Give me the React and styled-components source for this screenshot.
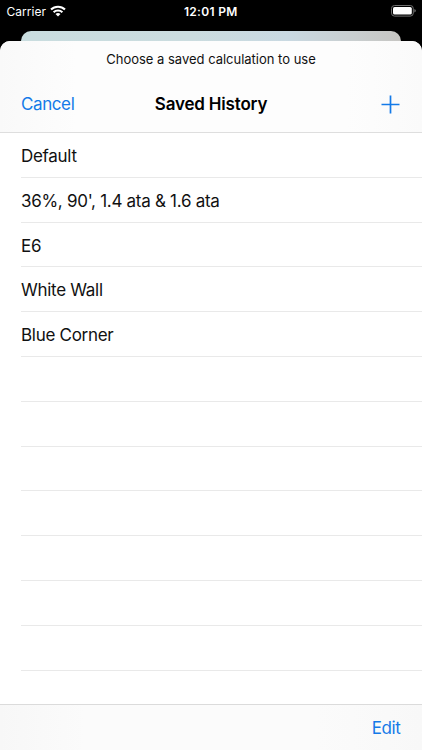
import React from 'react';
import styled, { createGlobalStyle } from 'styled-components';

const history = ["Default", "36%, 90', 1.4 ata & 1.6 ata", "E6", "White Wall", "Blue Corner"];
const emptyRows = 7;

export default function App() {
  return (
    <Screen>
      <GlobalStyle />
      <StatusBar>
        <Carrier>
          <span>Carrier</span>
          <svg width="16" height="12" viewBox="0 0 16 12" fill="none" stroke="#fff" strokeWidth="2.1">
            <path d="M1 4.6 A10 10 0 0 1 15 4.6" />
            <path d="M3.6 7.3 A6.3 6.3 0 0 1 12.4 7.3" />
            <path d="M5.5 9.1 A3.6 3.6 0 0 1 10.5 9.1 L8 11.6 Z" fill="#fff" stroke="none" />
          </svg>
        </Carrier>
        <Time>12:01 PM</Time>
        <Battery>
          <svg width="25" height="12" viewBox="0 0 25 12">
            <rect x="0.5" y="0.5" width="21.8" height="10.6" rx="3" fill="none" stroke="#6f6f6f" />
            <rect x="2" y="2" width="18.8" height="7.6" rx="1.6" fill="#fff" />
            <path d="M23.4 4 Q24.8 4.6 24.8 5.8 Q24.8 7 23.4 7.6 Z" fill="#777" />
          </svg>
        </Battery>
      </StatusBar>
      <BackCard />
      <Sheet>
        <Header>
          <Prompt>Choose a saved calculation to use</Prompt>
          <NavBar>
            <Action>Cancel</Action>
            <Title>Saved History</Title>
            <AddButton aria-label="Add">
              <svg width="19" height="19" viewBox="0 0 19 19" stroke="#147ae8" strokeWidth="1.7">
                <path d="M9.5 0.5 V18.5 M0.5 9.5 H18.5" />
              </svg>
            </AddButton>
          </NavBar>
        </Header>
        <List>
          {history.map((name) => (
            <Row key={name}>{name}</Row>
          ))}
          {Array.from({ length: emptyRows }, (_, index) => (
            <Row key={index} />
          ))}
        </List>
        <Toolbar>
          <Action>Edit</Action>
        </Toolbar>
      </Sheet>
    </Screen>
  )
}

const GlobalStyle = createGlobalStyle`
  * {
    box-sizing: border-box;
  }
  body {
    margin: 0;
    background: #000;
    font-family: Inter, "Liberation Sans", sans-serif;
  }
`;

const Screen = styled.div`
  display: flex;
  flex-direction: column;
  width: 422px;
  height: 750px;
  overflow: hidden;
  background: #000;
`;

const StatusBar = styled.div`
  display: grid;
  grid-template-columns: 1fr auto 1fr;
  align-items: center;
  flex: none;
  height: 31px;
  padding: 0 6px 9px 6.5px;
  color: #fff;
`;

const Carrier = styled.div`
  display: flex;
  align-items: center;
  gap: 4px;
  font-size: 12px;
  letter-spacing: 0.05px;
`;

const Time = styled.div`
  margin-right: 1px;
  font-size: 12px;
  font-weight: 600;
  letter-spacing: 0.3px;
`;

const Battery = styled.div`
  display: flex;
  justify-content: flex-end;
`;

const BackCard = styled.div`
  flex: none;
  height: 10px;
  margin: 0 21px;
  border-radius: 10px 10px 0 0;
  background: linear-gradient(90deg, #c9dddf 0%, #cbdcdf 45%, #c9d9e2 70%, #c9cecf 88%, #c6c5c2 100%);
`;

const Sheet = styled.div`
  display: flex;
  flex-direction: column;
  flex: 1;
  min-height: 0;
  overflow: hidden;
  border-radius: 10px 10px 0 0;
  background: #fff;
`;

const Header = styled.div`
  flex: none;
  height: 92px;
  border-bottom: 1px solid #dedede;
  background: linear-gradient(90deg, #f9f9f9 0%, #fdfdfd 18%, #fdfdfd 82%, #fafafa 100%);
`;

const Prompt = styled.div`
  height: 36px;
  line-height: 36px;
  font-size: 13px;
  letter-spacing: -0.01px;
  text-align: center;
  color: #111;
`;

const NavBar = styled.div`
  display: grid;
  grid-template-columns: 1fr auto 1fr;
  align-items: center;
  height: 55px;
  padding: 0 22px 1px 22px;
`;

const Action = styled.button`
  justify-self: start;
  margin-left: -1px;
  padding: 0;
  border: 0;
  background: none;
  color: #147ae8;
  font-family: inherit;
  font-size: 17px;
  letter-spacing: -0.4px;
`;

const Title = styled.h1`
  margin: 0;
  font-size: 17px;
  font-weight: 600;
  letter-spacing: -0.18px;
  color: #000;
`;

const AddButton = styled(Action)`
  display: flex;
  justify-self: end;
`;

const List = styled.div`
  flex: 1;
  min-height: 0;
  overflow: hidden;
`;

const Row = styled.div`
  height: 44.8px;
  margin-left: 21px;
  border-bottom: 1px solid #e9e9e9;
  line-height: 46px;
  font-size: 17px;
  letter-spacing: -0.29px;
  color: #111;
`;

const Toolbar = styled.div`
  display: flex;
  align-items: center;
  justify-content: flex-end;
  flex: none;
  height: 46px;
  padding: 0 21.5px 0 0;
  border-top: 1px solid #dbdbdb;
  background: linear-gradient(90deg, #f7f7f7 0%, #fbfbfb 20%, #fbfbfb 75%, #f8f8f8 100%);
`;
